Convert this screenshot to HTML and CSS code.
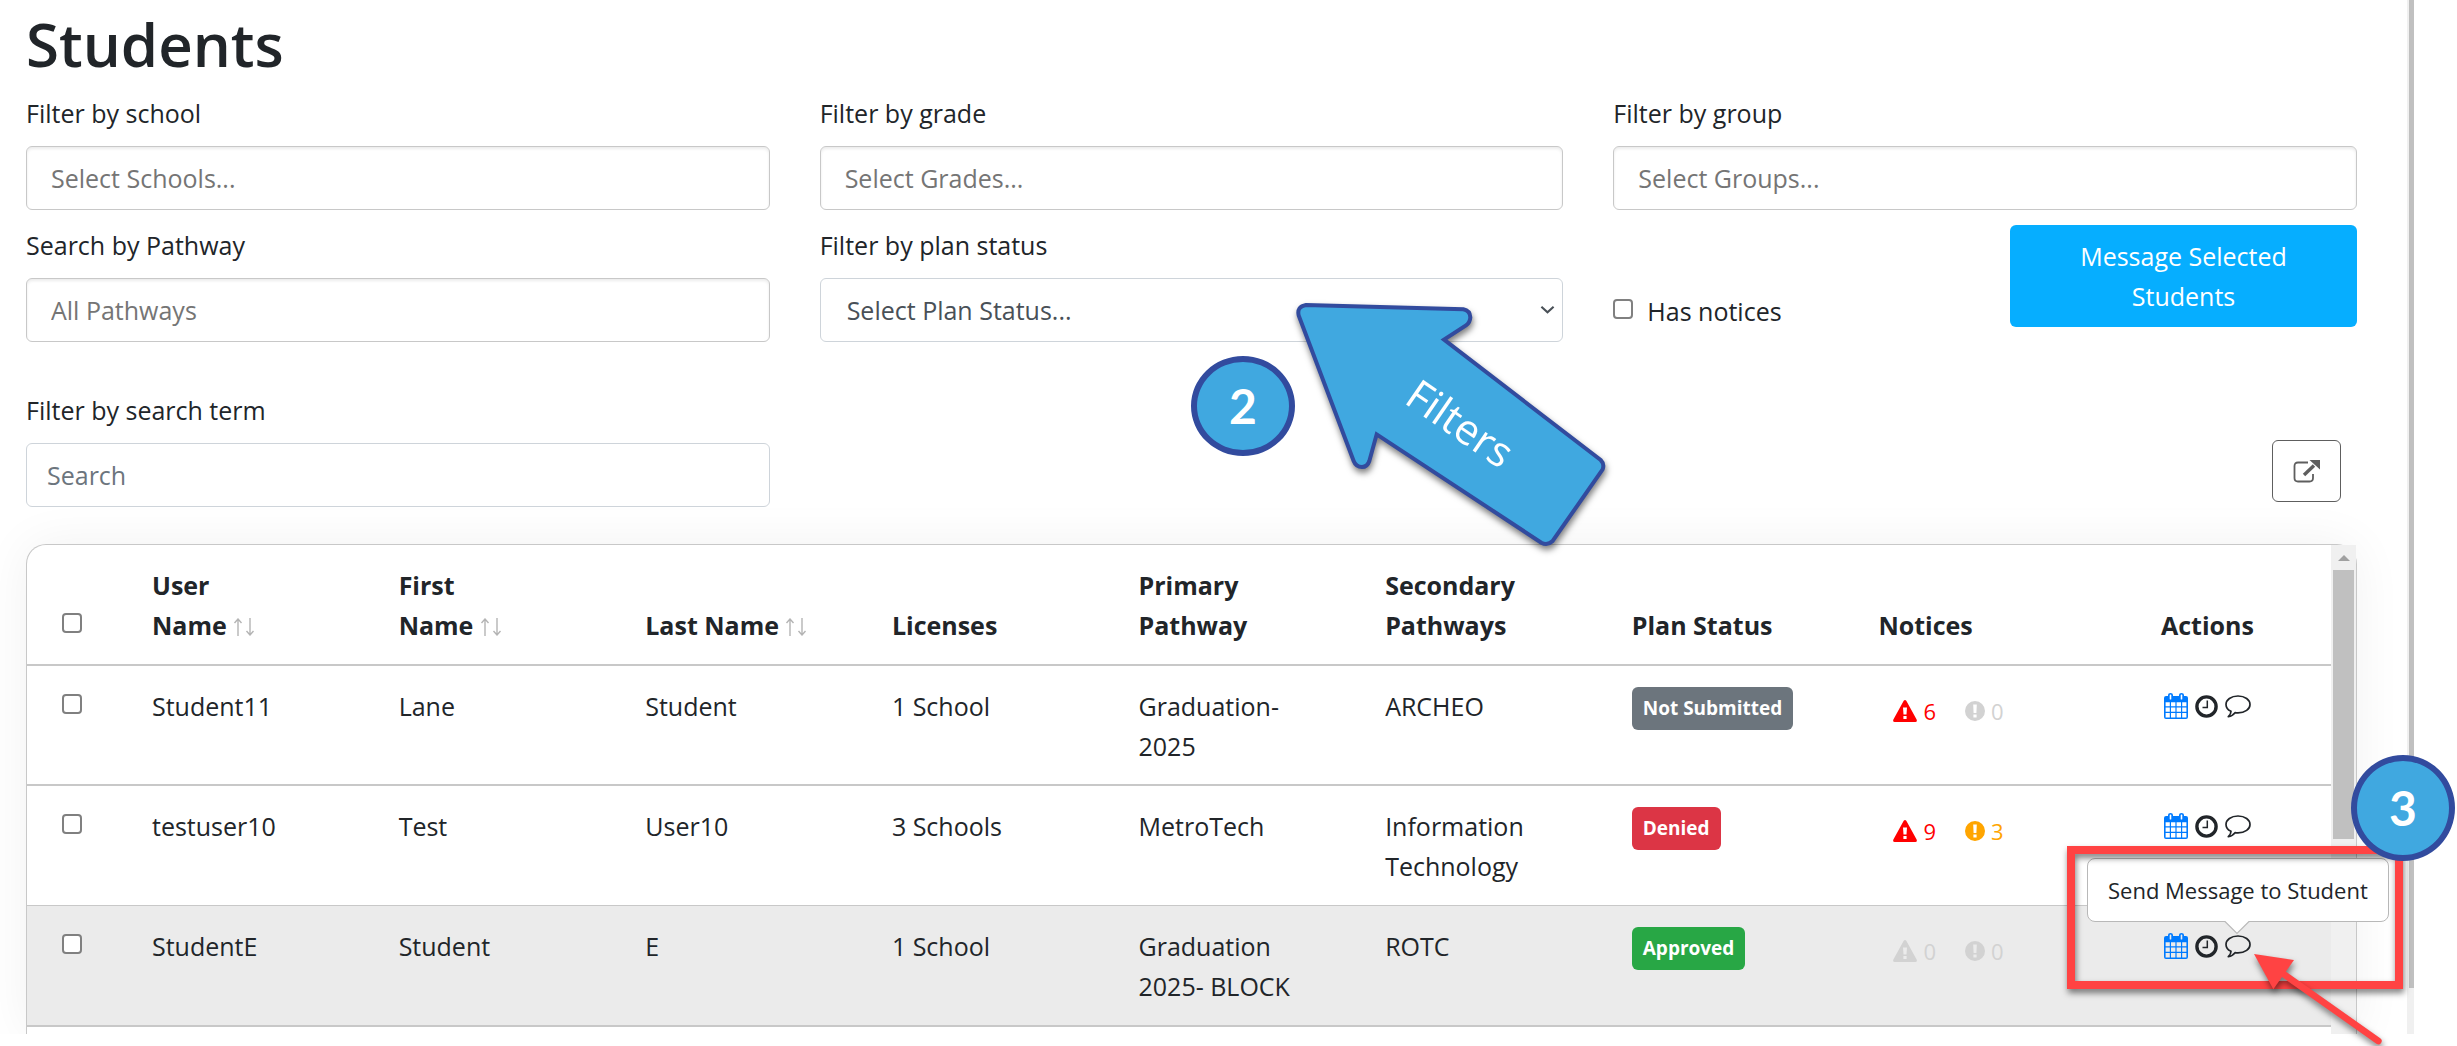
FILE: index.html
```html
<!DOCTYPE html>
<html lang="en">
<head>
  <meta charset="UTF-8">
  <title>Students</title>
  <link rel="stylesheet" href="styles.css">
</head>
<body>

<svg class="sprite" aria-hidden="true">
  <symbol id="calendar" viewBox="0 0 24 26">
    <path fill="currentColor" fill-rule="evenodd" d="M2 3h2V2q0-2 2.500-2T9 2v1h6V2q0-2 2.500-2T20 2v1h2q2 0 2 2v19q0 2-2 2H2q-2 0-2-2V5q0-2 2-2zM5.700 2v4q0 .6.8.6t.8-.6V2q0-.6-.8-.6t-.8.6zM16.700 2v4q0 .6.8.6t.8-.6V2q0-.6-.8-.6t-.8.6zM1.600 9.200v4h4.200v-4zM7 9.200v4h4.400v-4zM12.600 9.200v4H17v-4zM18.200 9.200v4h4.200v-4zM1.600 14.400v4.400h4.200v-4.400zM7 14.400v4.400h4.400v-4.400zM12.600 14.400v4.400H17v-4.400zM18.200 14.400v4.400h4.200v-4.400zM1.600 20v4.400h4.200V20zM7 20v4.400h4.400V20zM12.600 20v4.400H17V20zM18.200 20v4.400h4.200V20z"/>
  </symbol>
  <symbol id="clock" viewBox="0 0 23 23">
    <circle cx="11.500" cy="11.500" r="9.600" fill="none" stroke="currentColor" stroke-width="3.400"/>
    <path d="M12.300 5.500v7H7.500" fill="none" stroke="currentColor" stroke-width="1.500"/>
  </symbol>
  <symbol id="comment" viewBox="0 0 26 23">
    <path d="M13 1C6 1 1 4.700 1 9.400c0 3 2 5.400 5 6.900 0 2-.9 3.700-2.700 5.300 2.700-.4 5-1.500 6.700-3.900 1 .2 2 .2 3 .2 7 0 12-3.800 12-8.500S20 1 13 1z" fill="none" stroke="currentColor" stroke-width="1.700" stroke-linejoin="round"/>
  </symbol>
  <symbol id="warning" viewBox="0 0 24 22">
    <path fill="currentColor" fill-rule="evenodd" d="M10.700.8q1.300-1.600 2.600 0l10.300 18.700q.9 2.300-1.300 2.500H1.700Q-.5 21.800.4 19.500zM10 7.500l.5 7h3l.5-7zM10.400 16v3h3.200v-3z"/>
  </symbol>
  <symbol id="notice" viewBox="0 0 20 20">
    <path fill="currentColor" fill-rule="evenodd" d="M10 0a10 10 0 1 0 0 20a10 10 0 1 0 0-20zM8.200 3.500h3.600l-.4 8.500H8.600zM8.400 13.500h3.200v3H8.400z"/>
  </symbol>
  <symbol id="sort" viewBox="0 0 22 18">
    <path d="M5 18V1M1.500 5L5 1l3.500 4M17 0v17M13.500 13l3.500 4 3.500-4" fill="none" stroke="currentColor" stroke-width="1.400"/>
  </symbol>
</svg>

<main class="page">
  <h1>Students</h1>

  <form class="filters">
    <div class="field">
      <label for="school">Filter by school</label>
      <input class="control picker" type="text" id="school" placeholder="Select Schools...">
    </div>
    <div class="field">
      <label for="grade">Filter by grade</label>
      <input class="control picker" type="text" id="grade" placeholder="Select Grades...">
    </div>
    <div class="field">
      <label for="group">Filter by group</label>
      <input class="control picker" type="text" id="group" placeholder="Select Groups...">
    </div>

    <div class="field">
      <label for="pathway">Search by Pathway</label>
      <input class="control picker" type="text" id="pathway" placeholder="All Pathways">
    </div>
    <div class="field">
      <label for="status">Filter by plan status</label>
      <div class="select-wrap">
        <select class="control" id="status">
          <option>Select Plan Status...</option>
        </select>
        <svg class="chevron" viewBox="0 0 16 9"><path d="M1.500 1.500L8 7.500l6.500-6" fill="none" stroke="#495057" stroke-width="2.200"/></svg>
      </div>
    </div>
    <div class="message-row">
      <label class="has-notices"><input class="tick" type="checkbox">Has notices</label>
      <button class="message-btn" type="button">Message Selected Students</button>
    </div>
  </form>

  <div class="filters search-row">
    <div class="field">
      <label for="search">Filter by search term</label>
      <input class="control" type="text" id="search" placeholder="Search">
    </div>
    <button class="export-btn" type="button" aria-label="Export">
      <svg width="27" height="23" viewBox="0 0 27 23">
        <path d="M15 2.500H5Q1.500 2.500 1.500 6v12q0 3.500 3.500 3.500h11.500Q20 21.500 20 18v-4" fill="none" stroke="#5e5e5e" stroke-width="1.800"/>
        <path d="M11 15L21 5.500" stroke="#5e5e5e" stroke-width="3.400"/>
        <path d="M16.500 0H27v9.500z" fill="#5e5e5e"/>
      </svg>
    </button>
  </div>

  <div class="card">
    <div class="table-wrap">
      <table>
        <colgroup>
          <col class="col-check">
          <col><col><col><col><col><col><col><col>
          <col class="col-actions">
        </colgroup>
        <thead>
          <tr>
            <th><input class="tick" type="checkbox" aria-label="Select all"></th>
            <th><button class="sort">User<br>Name <svg><use href="#sort"/></svg></button></th>
            <th><button class="sort">First<br>Name <svg><use href="#sort"/></svg></button></th>
            <th><button class="sort">Last Name <svg><use href="#sort"/></svg></button></th>
            <th>Licenses</th>
            <th>Primary<br>Pathway</th>
            <th>Secondary<br>Pathways</th>
            <th>Plan Status</th>
            <th>Notices</th>
            <th class="actions-cell">Actions</th>
          </tr>
        </thead>
        <tbody>
          <tr>
            <td><input class="tick" type="checkbox" aria-label="Select Student11"></td>
            <td>Student11</td>
            <td>Lane</td>
            <td>Student</td>
            <td>1 School</td>
            <td>Graduation-<br>2025</td>
            <td>ARCHEO</td>
            <td><span class="badge gray">Not Submitted</span></td>
            <td>
              <div class="notices">
                <span class="alert"><svg class="i-warning"><use href="#warning"/></svg>6</span>
                <span><svg class="i-notice"><use href="#notice"/></svg>0</span>
              </div>
            </td>
            <td class="actions-cell">
              <div class="actions">
                <a href="#" aria-label="Calendar"><svg class="i-calendar"><use href="#calendar"/></svg></a>
                <button aria-label="History"><svg class="i-clock"><use href="#clock"/></svg></button>
                <button aria-label="Send Message to Student"><svg class="i-comment"><use href="#comment"/></svg></button>
              </div>
            </td>
          </tr>
          <tr class="thin">
            <td><input class="tick" type="checkbox" aria-label="Select testuser10"></td>
            <td>testuser10</td>
            <td>Test</td>
            <td>User10</td>
            <td>3 Schools</td>
            <td>MetroTech</td>
            <td>Information Technology</td>
            <td><span class="badge red">Denied</span></td>
            <td>
              <div class="notices">
                <span class="alert"><svg class="i-warning"><use href="#warning"/></svg>9</span>
                <span class="warn"><svg class="i-notice"><use href="#notice"/></svg>3</span>
              </div>
            </td>
            <td class="actions-cell">
              <div class="actions">
                <a href="#" aria-label="Calendar"><svg class="i-calendar"><use href="#calendar"/></svg></a>
                <button aria-label="History"><svg class="i-clock"><use href="#clock"/></svg></button>
                <button aria-label="Send Message to Student"><svg class="i-comment"><use href="#comment"/></svg></button>
              </div>
            </td>
          </tr>
          <tr class="hovered">
            <td><input class="tick" type="checkbox" aria-label="Select StudentE"></td>
            <td>StudentE</td>
            <td>Student</td>
            <td>E</td>
            <td>1 School</td>
            <td>Graduation<br>2025- BLOCK</td>
            <td>ROTC</td>
            <td><span class="badge green">Approved</span></td>
            <td>
              <div class="notices">
                <span><svg class="i-warning"><use href="#warning"/></svg>0</span>
                <span><svg class="i-notice"><use href="#notice"/></svg>0</span>
              </div>
            </td>
            <td class="actions-cell">
              <div class="actions">
                <a href="#" aria-label="Calendar"><svg class="i-calendar"><use href="#calendar"/></svg></a>
                <button aria-label="History"><svg class="i-clock"><use href="#clock"/></svg></button>
                <button aria-label="Send Message to Student"><svg class="i-comment"><use href="#comment"/></svg></button>
              </div>
            </td>
          </tr>
        </tbody>
      </table>
    </div>
    <div class="scrollbar">
      <svg class="scroll-up" viewBox="0 0 12 6"><path d="M6 0l6 6H0z" fill="#a0a0a0"/></svg>
      <div class="thumb"></div>
    </div>
  </div>
</main>
<div class="page-scroll"><div class="page-thumb"></div></div>

<!-- tooltip and callouts over the page -->
<div class="tooltip">Send Message to Student
  <svg class="tail" viewBox="0 0 26 14"><path d="M0 0h26L13 13z" fill="#fff"/><path d="M0 0.500h1L13 12.500 25 0.500h1" fill="none" stroke="#b8b8b8" stroke-width="1.200"/></svg>
</div>

<svg class="filters-arrow" viewBox="0 0 1500 870">
  <path d="M468 75L940 88Q960 92 961 112Q960 128 948 136L882 179L1352 540Q1364 552 1358 568L1208 783Q1192 798 1174 788L680 463L658 543Q652 561 636 561Q618 561 611 543L446 106Q440 80 468 75Z" fill="#40a8e0" stroke="#324b9e" stroke-width="12"/>
  <text transform="translate(758 367) rotate(34.500)" font-size="126" fill="#fff">Filters</text>
</svg>
<div class="circle two">2</div>

<div class="red-box"></div>
<svg class="red-arrow" viewBox="0 0 1251 918">
  <path d="M725 698L1015 903" stroke="#ff4343" stroke-width="20" stroke-linecap="round"/>
  <path d="M642 642L762 660L700 748Z" fill="#ff4343"/>
</svg>
<div class="circle three">3</div>

</body>
</html>
```
FILE: styles.css
```css
* {
  box-sizing: border-box;
}

body {
  margin: 0;
  height: 100vh;
  padding-bottom: 12px;
  display: flex;
  position: relative;
  overflow: hidden;
  background: #fff;
  color: #212529;
  font-family: 'Segoe UI', 'Open Sans', sans-serif;
  font-size: 25px;
  line-height: 40px;
}

input, select, button {
  font: inherit;
  color: inherit;
}

button {
  padding: 0;
  border: none;
  background: none;
  cursor: pointer;
}

.sprite {
  position: absolute;
  width: 0;
  height: 0;
}

.page {
  flex: 1;
  min-width: 0;
  display: flex;
  flex-direction: column;
  padding: 0 50px 0 26px;
  overflow: hidden;
}

h1 {
  margin: 3px 0 8px;
  font-size: 60px;
  line-height: 82px;
  font-weight: 600;
}

/* filters */
.filters {
  display: grid;
  grid-template-columns: repeat(3, 1fr);
  gap: 15px 50px;
}

.field label {
  display: block;
  margin-bottom: 13px;
}

.control {
  display: block;
  width: 100%;
  height: 64px;
  padding: 0 20px;
  border: 1px solid #ced4da;
  border-radius: 6px;
  background: #fff;
}

.control::placeholder {
  color: #6c757d;
  opacity: 1;
}

.picker {
  padding: 0 24px;
  border-color: #c8c8c8;
  box-shadow: inset 0 2px 3px rgba(0,0,0,0.08);
}

.picker::placeholder {
  color: #757575;
}

.select-wrap {
  position: relative;
}

select.control {
  appearance: none;
  padding: 0 26px;
  color: #495057;
}

.chevron {
  position: absolute;
  right: 8px;
  top: 27px;
  width: 15px;
  height: 9px;
  pointer-events: none;
}

.message-row {
  display: flex;
  justify-content: space-between;
  align-items: flex-start;
}

.has-notices {
  display: flex;
  gap: 14px;
  padding-top: 66px;
}

.tick {
  appearance: none;
  width: 20px;
  height: 20px;
  margin: 8px 0 12px;
  border: 2px solid #808080;
  border-radius: 4px;
  background: #fff;
}

.message-btn {
  width: 347px;
  padding: 11px 40px;
  border-radius: 6px;
  background: #06aeff;
  color: #fff;
}

.search-row {
  margin-top: 48px;
}

.export-btn {
  grid-column: 3;
  justify-self: end;
  align-self: end;
  display: flex;
  align-items: center;
  justify-content: center;
  width: 69px;
  height: 62px;
  margin: 0 16px 5px 0;
  border: 1px solid #5e5e5e;
  border-radius: 6px;
}

/* students table */
.card {
  flex: 1;
  min-height: 0;
  display: flex;
  margin-top: 37px;
  border: 1px solid #c8c8c8;
  border-bottom: none;
  border-radius: 20px 20px 0 0;
  box-shadow: 0 0 50px rgba(0,0,0,0.06);
  background: #fff;
}

.table-wrap {
  flex: 1;
  min-width: 0;
}

table {
  width: 100%;
  table-layout: fixed;
  border-collapse: separate;
  border-spacing: 0;
}

.col-check {
  width: 105px;
}

.col-actions {
  width: 226px;
}

th, td {
  padding: 20px 20px 18px;
  border-bottom: 2px solid #c8c8c8;
  text-align: left;
  vertical-align: top;
}

th {
  padding-bottom: 19px;
  vertical-align: bottom;
  font-weight: bold;
}

td .tick, th .tick {
  display: block;
  margin-left: 15px;
}

.thin td {
  padding-bottom: 19px;
  border-bottom-width: 1px;
}

.hovered td {
  padding-bottom: 19px;
  background: #ebebeb;
}

.sort {
  display: block;
  text-align: left;
}

.sort svg {
  width: 22px;
  height: 18px;
  color: #b4b4b4;
  vertical-align: -1px;
}

.badge {
  display: block;
  width: fit-content;
  margin-top: 1px;
  padding: 0 11px;
  border-radius: 6px;
  color: #fff;
  font-size: 19px;
  font-weight: bold;
  line-height: 43px;
}

.gray { background: #6c757d; }
.red { background: #dc3545; }
.green { background: #28a745; }

.notices {
  display: flex;
  gap: 29px;
  padding: 5px 0 0 15px;
  font-size: 22px;
  color: #d2d2d2;
}

.notices span {
  display: flex;
  align-items: center;
  gap: 6px;
}

.notices .alert { color: #f00; }
.notices .warn { color: #ffa500; }

.i-warning { width: 24px; height: 22px; }
.i-notice { width: 20px; height: 20px; }
.i-calendar { width: 24px; height: 26px; }
.i-clock { width: 23px; height: 23px; }
.i-comment { width: 26px; height: 23px; }

.actions-cell {
  padding-left: 56px;
}

.actions {
  display: flex;
  align-items: center;
  gap: 7px;
  height: 40px;
  padding-left: 3px;
}

.actions a, .actions button {
  display: flex;
}

.actions a {
  color: #007bff;
}

/* scrollbars */
.scrollbar {
  width: 25px;
  padding: 10px 2px 0;
  background: #f0f0f0;
}

.scroll-up {
  display: block;
  width: 12px;
  height: 6px;
  margin: 0 auto 9px;
}

.thumb {
  height: 269px;
  background: #c0c0c0;
}

.page-scroll {
  width: 7px;
  margin-right: 43px;
  padding-left: 2px;
  background: #f0f0f0;
}

.page-thumb {
  height: 988px;
  background: #c0c0c0;
}

/* callouts */
.tooltip {
  position: absolute;
  left: 2087px;
  top: 858px;
  padding: 11px 20px;
  border: 1px solid #b8b8b8;
  border-radius: 8px;
  background: #fff;
  font-size: 22px;
  white-space: nowrap;
}

.tail {
  position: absolute;
  left: 136px;
  top: 62px;
  width: 26px;
  height: 14px;
}

.filters-arrow {
  position: absolute;
  left: 1150px;
  top: 280px;
  width: 500px;
  height: 290px;
  overflow: visible;
  filter: drop-shadow(1px 4px 3px rgba(0,0,0,0.5));
}

.circle {
  position: absolute;
  display: flex;
  align-items: center;
  justify-content: center;
  width: 104px;
  border: 6px solid #324b9e;
  border-radius: 50%;
  background: #40a8e0;
  color: #fff;
  font-family: Lato, sans-serif;
  font-size: 48px;
  font-weight: bold;
}

.two {
  left: 1191px;
  top: 356px;
  height: 100px;
}

.three {
  left: 2351px;
  top: 755px;
  height: 106px;
}

.red-box {
  position: absolute;
  left: 2067px;
  top: 846px;
  width: 336px;
  height: 143px;
  border: 8px solid #ff4343;
  filter: drop-shadow(1px 4px 3px rgba(0,0,0,0.5));
}

.red-arrow {
  position: absolute;
  left: 2040px;
  top: 740px;
  width: 417px;
  height: 306px;
  filter: drop-shadow(1px 4px 3px rgba(0,0,0,0.5));
}
```
